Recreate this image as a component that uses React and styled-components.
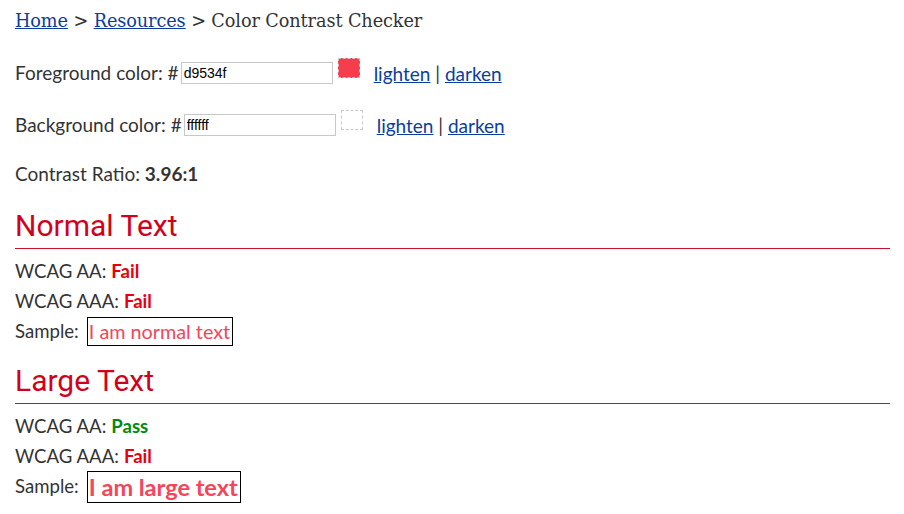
import React from "react";
import styled, { createGlobalStyle } from "styled-components";

const Global = createGlobalStyle`
  html, body { margin: 0; padding: 0; background: #fff; }
  body { font-family: Lato, "Noto Sans", sans-serif; color: #333; }
`;

const Page = styled.div`
  box-sizing: border-box;
  padding: 8px 14px 12px 15px;
  width: 904px;
  min-height: 514px;
`;

const Crumbs = styled.nav`
  font-family: "DejaVu Serif", "Liberation Serif", serif;
  font-size: 17.7px;
  line-height: 26px;
  color: #333;
  letter-spacing: -0.1px;
  a { color: #0b3d9e; text-decoration: underline; }
`;

const ColorRow = styled.div`
  display: flex;
  align-items: center;
  height: 30px;
  margin-top: ${(p) => p.$mt}px;
  font-size: 19px;
`;

const Label = styled.span`
  white-space: pre;
`;

const HexInput = styled.input`
  box-sizing: border-box;
  width: 152px;
  height: 22px;
  margin: 2px 0 0 2px;
  padding: 1px 2px;
  border: 1px solid #c8c8c8;
  font-family: "Liberation Sans", Arial, sans-serif;
  font-size: 14px;
  color: #000;
  outline: none;
`;

const Swatch = styled.div`
  box-sizing: border-box;
  width: 22px;
  height: 20px;
  margin: -8px 0 0 ${(p) => p.$ml}px;
  border: 1px dashed #c8c8c8;
  background: ${(p) => p.$color};
`;

const Links = styled.span`
  margin-left: ${(p) => p.$ml}px;
  margin-top: 2px;
  a { color: #0b3d9e; text-decoration: underline; }
`;

const Ratio = styled.p`
  margin: 20px 0 0;
  font-size: 19px;
  line-height: 30px;
  b { font-weight: 700; }
`;

const Heading = styled.h2`
  margin: ${(p) => p.$mt}px 0 0;
  padding-bottom: 4px;
  font-family: Roboto, sans-serif;
  font-weight: 400;
  font-size: 30px;
  line-height: 36px;
  color: #d0021b;
  border-bottom: 1px solid #c8102e;
`;

const Line = styled.div`
  font-size: 18.6px;
  min-height: 30px;
  line-height: 30px;
  white-space: nowrap;
`;

const Result = styled.b`
  margin-left: 5px;
  font-weight: 700;
  color: ${(p) => (p.$pass ? "#008a0e" : "#e8000d")};
`;

const Sample = styled.span`
  display: inline-block;
  vertical-align: middle;
  margin: -3px 0 0 8px;
  border: 1px solid #000;
  padding: 0 2px 0 1px;
  color: #f4455a;
  font-size: ${(p) => (p.$large ? 23.5 : 19.8)}px;
  font-weight: ${(p) => (p.$large ? 700 : 400)};
  line-height: ${(p) => (p.$large ? 30 : 27)}px;
`;

const Section = styled.section`
  display: flex;
  flex-direction: column;
  padding-top: 7px;
`;

function Checks({ aa, aaa, large }) {
  return (
    <Section>
      <Line>WCAG AA:<Result $pass={aa}>{aa ? "Pass" : "Fail"}</Result></Line>
      <Line>WCAG AAA:<Result $pass={aaa}>{aaa ? "Pass" : "Fail"}</Result></Line>
      <Line>
        Sample:
        <Sample $large={large}>{large ? "I am large text" : "I am normal text"}</Sample>
      </Line>
    </Section>
  );
}

export default function App() {
  return (
    <>
      <Global />
      <Page>
        <Crumbs>
          <a href="#">Home</a> &gt; <a href="#">Resources</a> &gt; Color Contrast Checker
        </Crumbs>
        <ColorRow $mt={23}>
          <Label>Foreground color: #</Label>
          <HexInput defaultValue="d9534f" />
          <Swatch $color="#f73c4e" $ml={5} />
          <Links $ml={14}>
            <a href="#">lighten</a> | <a href="#">darken</a>
          </Links>
        </ColorRow>
        <ColorRow $mt={22}>
          <Label>Background color: #</Label>
          <HexInput defaultValue="ffffff" />
          <Swatch $color="#fff" $ml={5} />
          <Links $ml={14}>
            <a href="#">lighten</a> | <a href="#">darken</a>
          </Links>
        </ColorRow>
        <Ratio>
          Contrast Ratio: <b>3.96:1</b>
        </Ratio>
        <Heading $mt={19}>Normal Text</Heading>
        <Checks aa={false} aaa={false} />
        <Heading $mt={17}>Large Text</Heading>
        <Checks aa={true} aaa={false} large />
      </Page>
    </>
  );
}
